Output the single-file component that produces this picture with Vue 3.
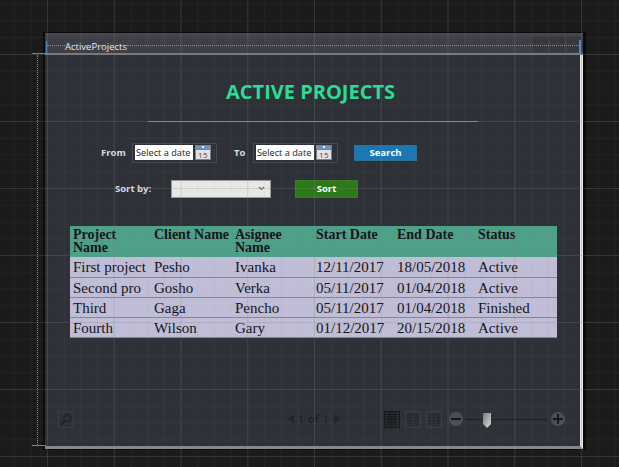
<template>
  <div class="canvas">
    <div class="window">
      <div class="titlebar">
        <span class="title-text">ActiveProjects</span>
        <div class="title-btns"><i></i><i></i><i></i></div>
      </div>

      <div class="body">
        <h1 class="heading">ACTIVE PROJECTS</h1>
        <div class="divider"></div>

        <div class="filter-row">
          <label class="lbl from">From</label>
          <div class="picker">
            <span class="date-input">Select a date</span>
            <svg class="cal" width="16" height="15" viewBox="0 0 16 15">
              <rect x="0" y="0" width="16" height="15" fill="#7d8188" />
              <rect x="1" y="1" width="14" height="3" fill="#6f93bb" />
              <rect x="7" y="1" width="2" height="2" fill="#e8eef5" />
              <rect x="1" y="5" width="14" height="9" fill="#e4e4e4" />
              <text x="8" y="13" text-anchor="middle" class="cal-num">15</text>
            </svg>
          </div>
          <label class="lbl to">To</label>
          <div class="picker">
            <span class="date-input">Select a date</span>
            <svg class="cal" width="16" height="15" viewBox="0 0 16 15">
              <rect x="0" y="0" width="16" height="15" fill="#7d8188" />
              <rect x="1" y="1" width="14" height="3" fill="#6f93bb" />
              <rect x="7" y="1" width="2" height="2" fill="#e8eef5" />
              <rect x="1" y="5" width="14" height="9" fill="#e4e4e4" />
              <text x="8" y="13" text-anchor="middle" class="cal-num">15</text>
            </svg>
          </div>
          <button class="btn search">Search</button>
        </div>

        <div class="sort-row">
          <label class="lbl sort-lbl">Sort by:</label>
          <div class="select">
            <svg width="7" height="5" viewBox="0 0 7 5"><path d="M1 1l2.5 2.5L6 1" fill="none" stroke="#666" stroke-width="1.2" /></svg>
          </div>
          <button class="btn sort">Sort</button>
        </div>

        <table class="grid">
          <thead>
            <tr>
              <th v-for="h in headers" :key="h">{{ h }}</th>
            </tr>
          </thead>
          <tbody>
            <tr v-for="row in rows" :key="row[0]">
              <td v-for="(c, i) in row" :key="i">{{ c }}</td>
            </tr>
          </tbody>
        </table>

        <div class="toolbar">
          <div class="find">
            <svg width="15" height="15" viewBox="0 0 15 15">
              <circle cx="9" cy="6" r="3.8" fill="none" stroke="#1d1f22" stroke-width="1.3" />
              <path d="M6 9L2 13" stroke="#1d1f22" stroke-width="2.2" />
            </svg>
          </div>
          <div class="pager">
            <span class="arrow left"></span>
            <span class="page-text">1 of 1</span>
            <span class="arrow right"></span>
          </div>
          <div class="views">
            <div class="view active">
              <svg width="12" height="12" viewBox="0 0 12 12"><path d="M1 1.5h10M1 4h10M1 6.5h10M1 9h10M1 11h10" stroke="#111214" stroke-width="1.2" /></svg>
            </div>
            <div class="view">
              <svg width="12" height="12" viewBox="0 0 12 12"><path d="M0.5 1.5h4.5M7 1.5h4.5M0.5 4.5h4.5M7 4.5h4.5M0.5 7.5h4.5M7 7.5h4.5M0.5 10.5h4.5M7 10.5h4.5" stroke="#24262a" stroke-width="1.4" /></svg>
            </div>
            <div class="view">
              <svg width="12" height="12" viewBox="0 0 12 12"><path d="M0.5 1.5h7M0.5 4.5h7M0.5 7.5h7M0.5 10.5h7" stroke="#24262a" stroke-width="1.2" /><rect x="9" y="1" width="2.5" height="10" fill="#24262a" /></svg>
            </div>
          </div>
          <div class="zoom">
            <span class="round"><b class="h"></b></span>
            <div class="track">
              <svg class="thumb" width="8" height="15" viewBox="0 0 8 15">
                <defs>
                  <linearGradient id="th" x1="0" y1="0" x2="1" y2="1">
                    <stop offset="0" stop-color="#777" />
                    <stop offset="1" stop-color="#ddd" />
                  </linearGradient>
                </defs>
                <path d="M0 0h8v11l-4 4-4-4z" fill="url(#th)" />
              </svg>
            </div>
            <span class="round"><b class="h"></b><b class="v"></b></span>
          </div>
        </div>
      </div>
    </div>

    <!-- designer marks + grid sit on top of everything -->
    <div class="mark dot-top"></div>
    <div class="mark dot-top2"></div>
    <div class="mark dot-left"></div>
    <div class="mark l-v"></div>
    <div class="mark l-h"></div>
    <div class="mark tick"></div>
    <div class="mark end"></div>
    <div class="gridlines"></div>
  </div>
</template>

<script setup>
const headers = ['Project Name', 'Client Name', 'Asignee Name', 'Start Date', 'End Date', 'Status']

const rows = [
  ['First project', 'Pesho', 'Ivanka', '12/11/2017', '18/05/2018', 'Active'],
  ['Second pro', 'Gosho', 'Verka', '05/11/2017', '01/04/2018', 'Active'],
  ['Third', 'Gaga', 'Pencho', '05/11/2017', '01/04/2018', 'Finished'],
  ['Fourth', 'Wilson', 'Gary', '01/12/2017', '20/15/2018', 'Active']
]
</script>

<style>
html, body {
  margin: 0;
  background: #1b1b1c;
}
</style>

<style scoped>
.canvas {
  position: relative;
  width: 619px;
  height: 467px;
  overflow: hidden;
  padding: 32px 33px 0 43px;
  box-sizing: border-box;
  background: #1b1b1c;
}

.window {
  width: 543px;
  height: 418px;
  box-sizing: border-box;
  border: solid #0b0b0b;
  border-width: 1px 3px 1px 2px;
  background: #2e3138;
  display: flex;
  flex-direction: column;
}

.titlebar {
  height: 22px;
  flex: none;
  box-sizing: border-box;
  background: #3f4047;
  border-top: 3px solid #46474e;
  border-bottom: 2px solid #77787b;
  display: flex;
  align-items: center;
  justify-content: space-between;
}
.title-text {
  margin-left: 20px;
  padding-top: 4px;
  font: 9.5px/12px "Open Sans", sans-serif;
  color: #e6ecf5;
}
.title-btns {
  display: flex;
  gap: 2px;
  margin-right: 1px;
}
.title-btns i {
  display: block;
  width: 15px;
  height: 15px;
  background: #37373d;
}

.body {
  flex: 1;
  display: flex;
  flex-direction: column;
  border-right: 3px solid #e4e4e4;
  border-bottom: 3px solid #87888b;
  min-height: 0;
}

.heading {
  margin: 24px 0 0;
  text-align: center;
  padding-right: 4px;
  font: bold 20px/26px "Open Sans", sans-serif;
  color: #2bdc92;
}
.divider {
  margin: 16px 0 0 103px;
  width: 330px;
  height: 1px;
  background: #8b8c8e;
}

.filter-row {
  display: flex;
  align-items: center;
  margin: 20px 0 0 56px;
  height: 21px;
}
.lbl {
  font: bold 9.5px/12px "Open Sans", sans-serif;
  color: #d5dde8;
}
.from { width: 31px; }
.to { width: 19px; margin-left: 17px; }
.picker {
  width: 85px;
  height: 20px;
  box-sizing: border-box;
  border: 1px solid #454a55;
  padding: 2px 5px 2px 2px;
  display: flex;
  align-items: center;
  justify-content: space-between;
}
.date-input {
  width: 58px;
  height: 15px;
  background: #fff;
  color: #222;
  font: 9.2px/16px "Open Sans", sans-serif;
  white-space: nowrap;
  padding-left: 1px;
  box-sizing: border-box;
}
.cal { display: block; }
.cal-num {
  font: 8px "Open Sans", sans-serif;
  letter-spacing: 0.5px;
  fill: #444;
}

.btn {
  padding: 0;
  color: #fff;
  font: bold 9.5px/14px "Open Sans", sans-serif;
  box-sizing: border-box;
}
.search {
  width: 63px;
  height: 16px;
  margin-left: 16px;
  background: #1a78b4;
  border: 1px solid #2f6f98;
}

.sort-row {
  display: flex;
  align-items: center;
  margin: 16px 0 0 70px;
  height: 19px;
}
.sort-lbl { width: 56px; }
.select {
  width: 100px;
  height: 18px;
  box-sizing: border-box;
  background: #e8e8e8;
  border: 1px solid #9a9a9a;
  display: flex;
  align-items: center;
  justify-content: flex-end;
  padding-right: 5px;
}
.sort {
  width: 63px;
  height: 18px;
  margin-left: 24px;
  background: #2b7a17;
  border: 1px solid #3c7a2e;
}

.grid {
  width: 487px;
  margin: 28px 0 0 25px;
  border-collapse: collapse;
  table-layout: fixed;
  font-family: "Liberation Serif", serif;
  color: #14141a;
}
.grid th {
  width: 81px;
  height: 31px;
  box-sizing: border-box;
  background: #4fa088;
  padding: 2px 0 0 3px;
  text-align: left;
  vertical-align: top;
  font-size: 14px;
  line-height: 13px;
}
.grid th:first-child,
.grid th:nth-child(3) { padding-right: 20px; }
.grid th:last-child { width: 82px; }
.grid td {
  height: 20px;
  box-sizing: border-box;
  background: #c0bdd6;
  border-bottom: 1px solid #86859a;
  padding: 1px 3px 0;
  font-size: 15px;
  line-height: 18px;
  white-space: nowrap;
  overflow: hidden;
}

.toolbar {
  margin-top: auto;
  margin-bottom: 18px;
  display: flex;
  align-items: center;
  height: 18px;
  padding-left: 13px;
}
.find {
  width: 16px;
  height: 17px;
  border: 1px solid #3b3d43;
  box-sizing: border-box;
  display: flex;
  align-items: center;
  justify-content: center;
}
.pager {
  display: flex;
  align-items: center;
  margin-left: 214px;
  width: 52px;
  justify-content: space-between;
}
.arrow {
  width: 0;
  height: 0;
  border-top: 5px solid transparent;
  border-bottom: 5px solid transparent;
}
.arrow.left { border-right: 6px solid #222428; }
.arrow.right { border-left: 6px solid #222428; }
.page-text {
  font: 10px/12px "Open Sans", sans-serif;
  letter-spacing: 0.8px;
  color: #17181b;
}
.views {
  display: flex;
  gap: 5px;
  margin-left: 44px;
}
.view {
  width: 16px;
  height: 17px;
  box-sizing: border-box;
  border: 1px solid #3c3e44;
  display: flex;
  align-items: center;
  justify-content: center;
}
.view.active {
  background: #26282c;
  border-color: #17181a;
}
.zoom {
  display: flex;
  align-items: center;
  margin-left: 7px;
}
.round {
  position: relative;
  width: 14px;
  height: 14px;
  border-radius: 50%;
  background: #4c4e54;
  flex: none;
}
.round b {
  position: absolute;
  background: #17181a;
}
.round .h { left: 2px; right: 2px; top: 6px; height: 2px; }
.round .v { top: 2px; bottom: 2px; left: 6px; width: 2px; }
.track {
  position: relative;
  width: 80px;
  height: 1px;
  margin: 0 4px;
  background: #1c1d20;
}
.thumb {
  position: absolute;
  left: 16px;
  top: -6px;
}

.mark {
  position: absolute;
  pointer-events: none;
}
.dot-top {
  left: 47px;
  top: 45px;
  width: 18px;
  border-top: 1px dotted #6c8fd8;
}
.dot-top2 {
  left: 127px;
  top: 45px;
  width: 452px;
  border-top: 1px dotted #6c8fd8;
}
.dot-left {
  left: 37px;
  top: 55px;
  height: 390px;
  border-left: 1px dotted #6c8fd8;
}
.l-v {
  left: 46px;
  top: 41px;
  width: 1px;
  height: 13px;
  background: #5b82cc;
}
.l-h {
  left: 32px;
  top: 53px;
  width: 15px;
  height: 1px;
  background: #5b82cc;
}
.tick {
  left: 32px;
  top: 445px;
  width: 14px;
  height: 1px;
  background: #5b82cc;
}
.end {
  left: 579px;
  top: 40px;
  width: 2px;
  height: 13px;
  background: #5b82cc;
}
.gridlines {
  position: absolute;
  inset: 0;
  pointer-events: none;
  background-image:
    linear-gradient(to right, rgba(130, 130, 130, 0.2) 1px, transparent 1px),
    linear-gradient(to bottom, rgba(130, 130, 130, 0.2) 1px, transparent 1px),
    linear-gradient(to right, rgba(130, 130, 130, 0.07) 1px, transparent 1px),
    linear-gradient(to bottom, rgba(130, 130, 130, 0.07) 1px, transparent 1px);
  background-size: 66.75px 67px, 67px 67px, 16.7px 16.75px, 16.75px 16.75px;
  background-position: 47px 0, 0 54px, 47px 0, 0 54px;
}
</style>
